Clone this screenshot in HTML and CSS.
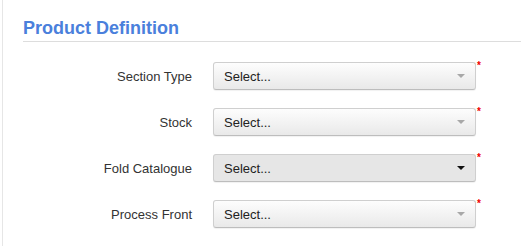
FILE: index.html
```html
<!DOCTYPE html>
<html lang="en">
<head>
    <meta charset="UTF-8">
    <title>Product Definition</title>
    <link rel="stylesheet" href="styles.css">
</head>
<body>
    <div class="panel">
        <h2>Product Definition</h2>

        <div class="form">
            <div class="form-row">
                <label>Section Type</label>
                <div class="select"><span>Select...</span><i class="caret"></i></div>
                <span class="required">*</span>
            </div>
            <div class="form-row">
                <label>Stock</label>
                <div class="select"><span>Select...</span><i class="caret"></i></div>
                <span class="required">*</span>
            </div>
            <div class="form-row">
                <label>Fold Catalogue</label>
                <div class="select hover"><span>Select...</span><i class="caret"></i></div>
                <span class="required">*</span>
            </div>
            <div class="form-row">
                <label>Process Front</label>
                <div class="select"><span>Select...</span><i class="caret"></i></div>
                <span class="required">*</span>
            </div>
        </div>
    </div>
</body>
</html>
```
FILE: styles.css
```css
body {
    margin: 0;
    font-family: "Liberation Sans", Arial, sans-serif;
    background: white;
    color: #333;
}

.panel {
    box-sizing: border-box;
    margin-left: 2px;
    height: 246px;
    overflow: hidden;
    border-left: 1px solid #e6e6e6;
    padding: 18px 0 0 20px;
}

h2 {
    margin: 0;
    font-size: 18px;
    line-height: 21px;
    font-weight: bold;
    color: #4a80dc;
    padding-bottom: 2px;
    border-bottom: 1px solid #dddddd;
}

.form {
    padding-top: 20px;
    display: flex;
    flex-direction: column;
    gap: 18px;
}

.form-row {
    display: grid;
    grid-template-columns: 169px 263px auto;
    column-gap: 21px;
    align-items: center;
}

.form-row label {
    text-align: right;
    font-size: 13px;
    color: #333;
}

.select {
    box-sizing: border-box;
    height: 28px;
    display: flex;
    align-items: center;
    justify-content: space-between;
    padding: 0 10px 0 10px;
    border: 1px solid #cfcfcf;
    border-bottom-color: #bdbdbd;
    border-radius: 3px;
    background: linear-gradient(#fdfdfd, #e9e9e9);
    box-shadow: 0 1px 1px rgba(0,0,0,0.06);
    font-size: 13px;
    color: #222;
}

.select.hover {
    background: #e6e6e6;
}

.caret {
    width: 0;
    height: 0;
    border-left: 4px solid transparent;
    border-right: 4px solid transparent;
    border-top: 4px solid #a8a8a8;
}

.select.hover .caret {
    border-top-color: #111;
}

.required {
    align-self: start;
    margin-left: -20px;
    margin-top: -1px;
    color: #e00;
    font-size: 10px;
    line-height: 10px;
    font-weight: bold;
}
```
